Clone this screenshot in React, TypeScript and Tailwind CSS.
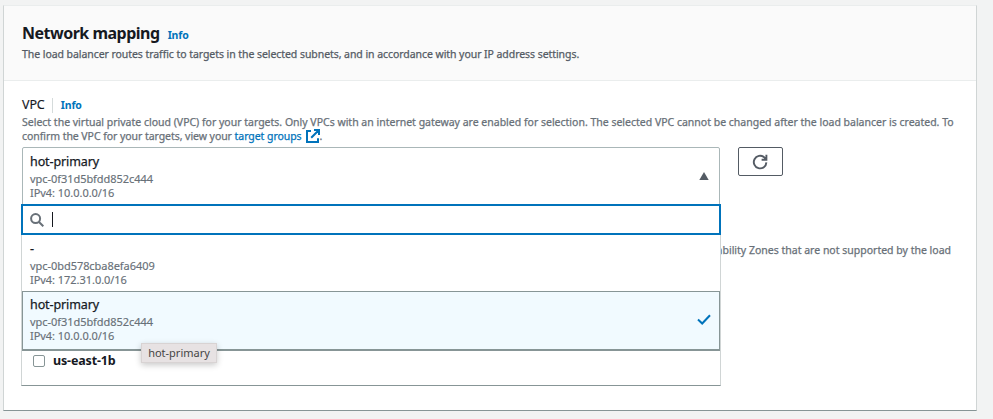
import type { ReactNode } from "react";

function Line({ className, children }: { className: string; children: ReactNode }) {
  return <p className={"whitespace-nowrap " + className}>{children}</p>;
}

const vpcs = [
  { name: "-", id: "vpc-0bd578cba8efa6409", cidr: "IPv4: 172.31.0.0/16" },
  { name: "hot-primary", id: "vpc-0f31d5bfdd852c444", cidr: "IPv4: 10.0.0.0/16" },
];

function Vpc({ name, id, cidr }: { name: string; id: string; cidr: string }) {
  return (
    <div>
      <Line className="text-[12.5px] leading-[18px] tracking-[-0.1px] text-[#16191f] [-webkit-text-stroke:0.25px_#16191f]">{name}</Line>
      <Line className="mt-px text-[11px] leading-[14px] tracking-[-0.05px] text-[#687078] [-webkit-text-stroke:0.15px_#687078]">{id}</Line>
      <Line className="text-[11px] leading-[14px] tracking-[-0.04px] text-[#687078] [-webkit-text-stroke:0.15px_#687078]">{cidr}</Line>
    </div>
  );
}

export default function App() {
  return (
    <div className="h-[419px] w-[993px] overflow-hidden bg-[#f2f3f3] pt-[5px] pl-[3px] font-['Noto_Sans','Open_Sans',sans-serif]">
      <section className="h-[406px] w-[974px] border border-t-[#eaeded] border-r-[#d0d5d5] border-b-[#879596] border-l-[#d0d5d5] bg-white">
        <header className="h-[75px] border-b border-[#eaeded] bg-[#fafafa] pt-[16px] pl-[18px]">
          <div className="flex items-baseline gap-[8px]">
            <h2 className="text-[16px] leading-[22px] font-bold tracking-[-0.5px] text-[#16191f]">Network mapping</h2>
            <a className="text-[10.5px] font-bold tracking-[-0.15px] text-[#0073bb]">Info</a>
          </div>
          <Line className="mt-[2px] text-[10.5px] leading-[16px] tracking-[-0.062px] text-[#545b64] [-webkit-text-stroke:0.25px_#545b64]">
            The load balancer routes traffic to targets in the selected subnets, and in accordance with your IP address settings.
          </Line>
        </header>
        <div className="pt-[15px] pl-[18px]">
          <div className="flex items-center">
            <span className="text-[12.5px] leading-[18px] tracking-[-0.1px] text-[#16191f] [-webkit-text-stroke:0.15px_#16191f]">VPC</span>
            <span className="ml-[7px] h-[15px] w-px bg-[#d5dbdb]" />
            <a className="ml-[8px] text-[10.5px] leading-[18px] font-bold tracking-[-0.1px] text-[#0073bb]">Info</a>
          </div>
          <Line className="mt-px text-[10.5px] leading-[14px] tracking-[-0.002px] text-[#687078] [-webkit-text-stroke:0.25px_#687078]">
            Select the virtual private cloud (VPC) for your targets. Only VPCs with an internet gateway are enabled for selection. The selected VPC cannot be changed after the load balancer is created. To
          </Line>
          <div className="flex items-center text-[10.5px] leading-[14px] tracking-[-0.055px] text-[#687078] [-webkit-text-stroke:0.25px]">
            <Line className="">confirm the VPC for your targets, view your <a className="text-[#0073bb]">target groups</a></Line>
            <svg className="ml-[4px] h-[14px] w-[14px]" viewBox="0 0 14 14" fill="none" stroke="#0073bb" strokeWidth="2">
              <path d="M5 2H1v11h11V9.2M8 1h5v5M12.7 1.3L5.2 8.8" />
            </svg>
            <span>.</span>
          </div>
          <div className="mt-[4px] flex items-start gap-[18px]">
            <div className="relative h-[58px] w-[698px]">
              <div className="flex h-[59px] items-start justify-between rounded-t-[2px] border border-[#aab7b8] bg-white pt-[5px] pr-[10px] pl-[7px]">
                <Vpc {...vpcs[1]} />
                <svg className="mt-[19px] h-[8px] w-[10px]" viewBox="0 0 10 8"><path d="M5 0l4.7 8H.3z" fill="#545b64" /></svg>
              </div>
              <div className="absolute top-[57px] -left-px z-10 w-[700px]">
                <div className="flex h-[31px] items-center border-2 border-[#0073bb] bg-white pl-[7px]">
                  <svg className="h-[14px] w-[14px]" viewBox="0 0 14 14" fill="none" stroke="#687078" strokeWidth="2">
                    <circle cx="5.6" cy="5.6" r="4.5" /><path d="M9 9l4.3 4.3" />
                  </svg>
                  <span className="ml-[8px] h-[15px] w-px bg-[#16191f]" />
                </div>
                <div className="h-[56px] border-r border-l border-[#d0d5d5] bg-white pt-[5px] pl-[8px]">
                  <Vpc {...vpcs[0]} />
                </div>
                <div className="ml-px flex h-[60px] w-[698px] justify-between border border-b-2 border-[#879596] bg-[#f1faff] pt-[4px] pr-[8px] pl-[7px]">
                  <Vpc {...vpcs[1]} />
                  <svg className="mt-[18px] h-[12px] w-[14px]" viewBox="0 0 14 12" fill="none" stroke="#0073bb" strokeWidth="2">
                    <path d="M1 5.5l4.2 4L13 1.2" />
                  </svg>
                </div>
              </div>
              <div className="absolute top-[196px] left-[119px] z-20 flex h-[20px] w-[76px] items-center justify-center border border-[#d8d3d3] bg-[#e7e2e3] text-[11px] text-[#454545] shadow-[0_2px_6px_rgba(0,0,0,0.22)]">
                hot-primary
              </div>
            </div>
            <button className="flex h-[29px] w-[45px] items-center justify-center rounded-[2px] border border-[#545b64] bg-white">
              <svg className="-ml-px h-[16px] w-[16px]" viewBox="0 0 16 16" fill="none" stroke="#545b64" strokeWidth="1.9">
                <path d="M14.4 8.4a6.3 6.3 0 1 1-2.3-5.2l2 2.2M14.4 .8v5H9.6" />
              </svg>
            </button>
          </div>
          <div className="mt-[38px] w-[929px]">
            <Line className="text-right text-[10.5px] leading-[14px] tracking-[0.002px] text-[#687078] [-webkit-text-stroke:0.25px_#687078]">Availability Zones that are not supported by the load</Line>
          </div>
          <div className="mt-[18px] -ml-px flex h-[111px] w-[700px] items-end border border-t-transparent border-r-[#d0d5d5] border-b-[#879596] border-l-[#d0d5d5] pb-[18px] pl-[11px]">
            <span className="h-[12px] w-[12px] rounded-[2px] border border-[#879596] bg-white" />
            <span className="-mb-[3px] ml-[8px] text-[12.5px] leading-[18px] font-bold tracking-[-0.15px] text-[#16191f]">us-east-1b</span>
          </div>
        </div>
      </section>
    </div>
  );
}
